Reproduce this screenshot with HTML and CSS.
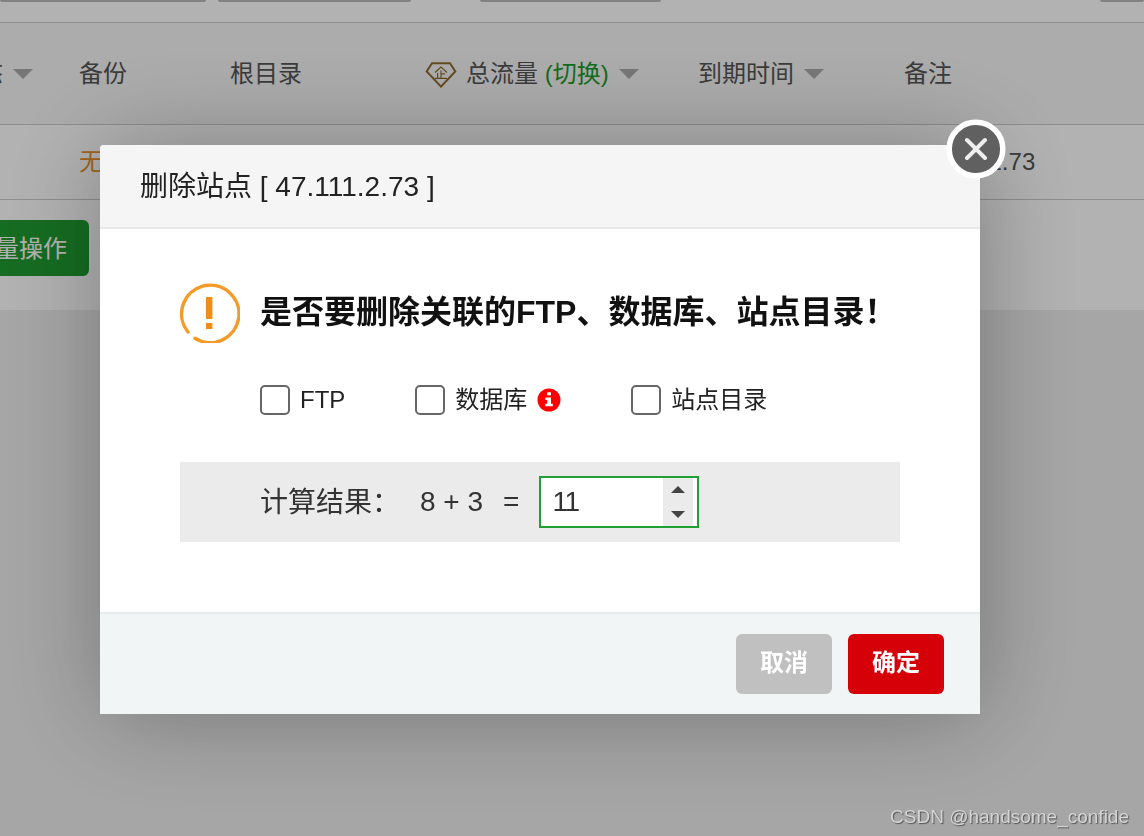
FILE: index.html
```html
<!DOCTYPE html>
<html lang="zh-CN">
<head>
  <meta charset="UTF-8" />
  <meta name="viewport" content="width=device-width, initial-scale=1" />
  <title>网站管理</title>
  <link rel="stylesheet" href="styles.css">
</head>
<body>

  <div class="page">
    <div class="toolbar">
      <span class="box box-first"></span>
      <span class="box box-second"></span>
      <span class="box box-third"></span>
      <span class="box box-last"></span>
    </div>

    <div class="row head">
      <div class="col-status"><span class="cut">态</span><i class="caret"></i></div>
      <div class="col-backup"><span>备份</span></div>
      <div class="col-root"><span>根目录</span></div>
      <div class="col-flow">
        <svg class="gem" viewBox="0 0 32 28" width="32" height="28">
          <path d="M7 3.2H25L30.3 11.5L16 26.6L1.7 11.5Z" />
          <path class="thin" d="M10 12.5L16 7L22 12.5M16 10.5V18M16 13.8H20M12.6 13V18M10 18.3H22" />
        </svg>
        <span>总流量 <a class="switch">(切换)</a></span>
        <i class="caret"></i>
      </div>
      <div class="col-expire"><span>到期时间</span><i class="caret"></i></div>
      <div class="col-note"><span>备注</span></div>
    </div>

    <div class="row site">
      <div class="site-backup">无备份</div>
      <div class="site-note">47.111.2.73</div>
    </div>

    <div class="batch">
      <button class="batch-btn">批量操作</button>
    </div>
  </div>

  <div class="shade">
    <div class="modal">
      <div class="modal-title">删除站点 [ 47.111.2.73 ]</div>
      <button class="close" aria-label="关闭">
        <svg viewBox="0 0 60 60" width="60" height="60">
          <circle cx="30" cy="30" r="26.8" />
          <path d="M21 21L39 39M39 21L21 39" />
        </svg>
      </button>

      <div class="modal-body">
        <div class="question">
          <svg class="warn" viewBox="0 0 60 60" width="60" height="60">
            <path class="arc" d="M8 49A28.7 28.7 0 1 1 15 55.2" />
            <rect x="26" y="14" width="6.4" height="22" />
            <rect x="26" y="40" width="6.4" height="6" />
          </svg>
          <h3>是否要删除关联的FTP、数据库、站点目录！</h3>
        </div>

        <div class="options">
          <label><input type="checkbox" /><span class="latin">FTP</span></label>
          <label><input type="checkbox" /><span>数据库</span>
            <svg class="info" viewBox="0 0 24 24" width="24" height="24">
              <circle cx="12" cy="12" r="11.5" />
              <path d="M10.2 4.3H14V7.3H10.2ZM8.3 9.5H14V15.7H15.8V18.2H8.3V15.7H10.2V12H8.3Z" />
            </svg>
          </label>
          <label><input type="checkbox" /><span>站点目录</span></label>
        </div>

        <div class="calc">
          <span class="calc-label">计算结果：</span>
          <span class="calc-sum">8 + 3</span>
          <span class="calc-eq">=</span>
          <div class="number">
            <input type="text" value="11" />
            <div class="spin"><i class="up"></i><i class="down"></i></div>
          </div>
        </div>
      </div>

      <div class="modal-footer">
        <button class="btn cancel">取消</button>
        <button class="btn confirm">确定</button>
      </div>
    </div>
  </div>

  <div class="watermark">CSDN @handsome_confide</div>

</body>
</html>
```
FILE: styles.css
```css
* {
  box-sizing: border-box;
  font-family: "Liberation Sans", "Noto Sans CJK SC", sans-serif;
}

body {
  margin: 0;
  height: 100vh;
  overflow: hidden;
  background: #eee;
  color: #555;
  font-size: 24px;
}

button {
  border: none;
  padding: 0;
  cursor: pointer;
}

svg {
  display: block;
  flex: none;
}

.page {
  height: 310px;
  background: #fff;
  overflow: hidden;
}

.toolbar {
  display: flex;
  height: 22px;
}

.box {
  height: 2px;
  background: #bbb;
  border-radius: 0 0 4px 4px;
}

.box-first {
  width: 206px;
}

.box-second {
  width: 193px;
  margin-left: 12px;
}

.box-third {
  width: 181px;
  margin-left: 69px;
}

.box-last {
  width: 44px;
  margin-left: auto;
}

.row {
  display: flex;
  align-items: center;
  white-space: nowrap;
  border-bottom: 1px solid #ccc;
}

.head {
  height: 103px;
  background: #f6f6f6;
  border-top: 1px solid #ccc;
}

.head > div {
  display: flex;
  align-items: center;
}

.head span {
  padding-bottom: 4px;
}

.col-status {
  width: 79px;
}

.cut {
  margin-left: -21px;
}

.col-backup {
  width: 151px;
}

.col-root {
  width: 195px;
}

.col-flow {
  width: 273px;
}

.col-expire {
  width: 206px;
}

.gem {
  margin-right: 9px;
  fill: none;
  stroke: #8f6c2c;
  stroke-width: 2;
}

.gem .thin {
  stroke-width: 1.2;
}

.switch {
  color: #1b9c2e;
}

.caret {
  border: 10px solid transparent;
  border-top-color: #aaa;
  border-bottom: 0;
  margin-left: 10px;
}

.site {
  height: 75px;
}

.site-backup {
  width: 833px;
  margin-left: 79px;
  padding-bottom: 5px;
  color: #e8922b;
}

.batch-btn {
  width: 168px;
  height: 56px;
  margin: 20px 0 0 -79px;
  padding: 0 22px 4px 0;
  text-align: right;
  border-radius: 6px;
  background: #1f9c30;
  color: #fff;
  font-size: 24px;
}

.shade {
  position: fixed;
  inset: 0;
  padding: 145px 0 0 100px;
  background: rgba(0, 0, 0, 0.3);
}

.modal {
  position: relative;
  width: 880px;
  background: #fff;
  border-radius: 4px 4px 0 0;
  box-shadow: 2px 2px 100px rgba(0, 0, 0, 0.3);
  color: #222;
}

.modal-title {
  height: 84px;
  padding: 1px 0 0 40px;
  border-bottom: 2px solid #e8e8e8;
  border-radius: 4px 4px 0 0;
  background: #f5f5f5;
  font-size: 28px;
  line-height: 82px;
}

.close {
  position: absolute;
  top: -26px;
  right: -26px;
  background: none;
}

.close circle {
  fill: #606060;
  stroke: #fff;
  stroke-width: 5.5;
}

.close path {
  stroke: #eee;
  stroke-width: 4;
  stroke-linecap: round;
}

.modal-body {
  height: 383px;
  padding: 54px 80px 0;
}

.question {
  display: flex;
  align-items: center;
  height: 60px;
}

.warn {
  margin-right: 20px;
  fill: #f18c16;
}

.warn .arc {
  fill: none;
  stroke: #f39a28;
  stroke-width: 3.4;
  stroke-linecap: round;
}

h3 {
  margin: 0;
  padding-bottom: 8px;
  color: #111;
  font-size: 32px;
  white-space: nowrap;
}

.options {
  display: flex;
  gap: 70px;
  margin: 42px 0 47px 80px;
}

.options label {
  display: flex;
  align-items: center;
  height: 30px;
}

.options span {
  padding-bottom: 5px;
}

.options .latin {
  padding-bottom: 1px;
}

.options input {
  appearance: none;
  width: 30px;
  height: 30px;
  margin: 0 10px 0 0;
  border: 2px solid #666;
  border-radius: 5px;
  background: #fff;
}

.info {
  margin-left: 10px;
  fill: #f00;
}

.info path {
  fill: #fff;
}

.calc {
  display: flex;
  align-items: center;
  height: 80px;
  padding-left: 80px;
  background: #ebebeb;
  color: #333;
  font-size: 28px;
}

.calc-label {
  width: 160px;
  padding-bottom: 4px;
}

.calc-eq {
  margin: 0 20px;
}

.number {
  display: flex;
  width: 160px;
  height: 52px;
  padding-right: 4px;
  border: 2px solid #20a035;
  background: #fff;
}

.number input {
  flex: 1;
  min-width: 0;
  padding: 0 11px;
  border: none;
  outline: none;
  color: #333;
  font-size: 28px;
  letter-spacing: -1.5px;
}

.spin {
  display: flex;
  flex-direction: column;
  align-items: center;
  justify-content: space-between;
  width: 30px;
  padding: 8px 0;
  background: #ebebeb;
}

.up,
.down {
  border: 7px solid transparent;
}

.up {
  border-top: 0;
  border-bottom-color: #444;
}

.down {
  border-bottom: 0;
  border-top-color: #444;
}

.modal-footer {
  display: flex;
  justify-content: flex-end;
  gap: 16px;
  height: 102px;
  padding: 20px 36px 0 0;
  border-top: 2px solid #e4ecec;
  background: #f1f5f6;
}

.btn {
  width: 96px;
  height: 60px;
  padding-bottom: 8px;
  border-radius: 6px;
  color: #fff;
  font-size: 24px;
  font-weight: bold;
}

.cancel {
  background: #c0c0c0;
}

.confirm {
  background: #d60008;
}

.watermark {
  position: fixed;
  right: 15px;
  bottom: 8px;
  color: #d4d4d4;
  font-size: 19px;
  text-shadow: 1px 1px 1px #555;
}
```
